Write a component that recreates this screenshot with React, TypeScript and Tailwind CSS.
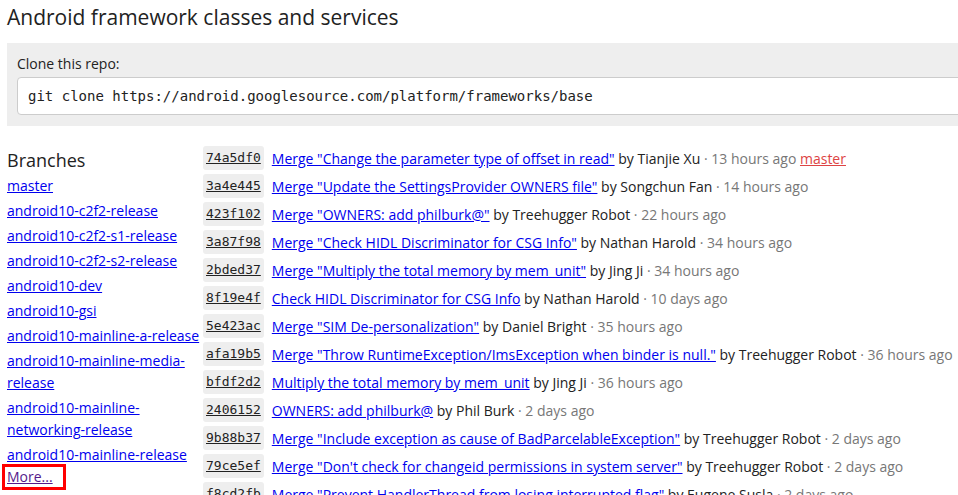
import React from "react";

const commits: { h: string; m: string; a: string; t: string; tag?: string }[] = [
  { h: "74a5df0", m: 'Merge "Change the parameter type of offset in read"', a: "Tianjie Xu", t: "13 hours ago", tag: "master" },
  { h: "3a4e445", m: 'Merge "Update the SettingsProvider OWNERS file"', a: "Songchun Fan", t: "14 hours ago" },
  { h: "423f102", m: 'Merge "OWNERS: add philburk@"', a: "Treehugger Robot", t: "22 hours ago" },
  { h: "3a87f98", m: 'Merge "Check HIDL Discriminator for CSG Info"', a: "Nathan Harold", t: "34 hours ago" },
  { h: "2bded37", m: 'Merge "Multiply the total memory by mem_unit"', a: "Jing Ji", t: "34 hours ago" },
  { h: "8f19e4f", m: "Check HIDL Discriminator for CSG Info", a: "Nathan Harold", t: "10 days ago" },
  { h: "5e423ac", m: 'Merge "SIM De-personalization"', a: "Daniel Bright", t: "35 hours ago" },
  { h: "afa19b5", m: 'Merge "Throw RuntimeException/ImsException when binder is null."', a: "Treehugger Robot", t: "36 hours ago" },
  { h: "bfdf2d2", m: "Multiply the total memory by mem_unit", a: "Jing Ji", t: "36 hours ago" },
  { h: "2406152", m: "OWNERS: add philburk@", a: "Phil Burk", t: "2 days ago" },
  { h: "9b88b37", m: 'Merge "Include exception as cause of BadParcelableException"', a: "Treehugger Robot", t: "2 days ago" },
  { h: "79ce5ef", m: 'Merge "Don\'t check for changeid permissions in system server"', a: "Treehugger Robot", t: "2 days ago" },
  { h: "f8cd2fb", m: 'Merge "Prevent HandlerThread from losing interrupted flag"', a: "Eugene Susla", t: "2 days ago" },
];

const branches = [
  "master",
  "android10-c2f2-release",
  "android10-c2f2-s1-release",
  "android10-c2f2-s2-release",
  "android10-dev",
  "android10-gsi",
  "android10-mainline-a-release",
  "android10-mainline-media-release",
  "android10-mainline-networking-release",
  "android10-mainline-release",
];

export default function App() {
  return (
    <div className="w-[958px] h-[495px] overflow-hidden bg-white text-[#222] font-['Open_Sans',sans-serif]">
      <div className="w-[1100px] pl-[7px]">
        <h1 className="pt-[3px] text-[21px] leading-[28px] font-normal">Android framework classes and services</h1>
        <div className="mt-[12px] bg-[#eeeeee] pl-[10px] pt-[11px] pb-[11px]">
          <div className="text-[14px] leading-[20px]">Clone this repo:</div>
          <div className="mt-[3px] h-[38px] bg-white border border-[#cccccc] rounded-l-[4px] flex items-center pl-[10px] font-['DejaVu_Sans_Mono',monospace] text-[14px] text-[#222]">
            git clone https://android.googlesource.com/platform/frameworks/base
          </div>
        </div>
        <div className="flex mt-[18px]">
          <div className="w-[196px] shrink-0">
            <h2 className="pt-[4px] text-[18px] leading-[24px] font-normal">Branches</h2>
            <ul>
              {branches.map((b) => (
                <li key={b} className="pt-[3px] text-[14px] leading-[22px]">
                  <a href="#" className="text-[#0000ee] underline">{b}</a>
                </li>
              ))}
              <li className="-mt-[2px] text-[14px] leading-[20px]">
                <span className="inline-block -ml-[5px] w-[64px] border-[3px] border-[#ff0000] pl-[2px]">
                  <a href="#" className="text-[#551a8b] underline">More...</a>
                </span>
              </li>
            </ul>
          </div>
          <ul className="whitespace-nowrap">
            {commits.map((c) => (
              <li key={c.h} className="h-[28px] flex items-center text-[14px]">
                <span className="h-[24px] flex items-center px-[3px] bg-[#eeeeee] rounded-[3px] font-['DejaVu_Sans_Mono',monospace] text-[13px] text-[#222] underline">
                  {c.h}
                </span>
                <span className="ml-[8px]">
                  <a href="#" className="text-[#0000ee] underline">{c.m}</a>
                  <span className="text-[#222]"> by {c.a}</span>
                  <span className="text-[#777]"> · {c.t}</span>
                  {c.tag && (
                    <>
                      {" "}
                      <a href="#" className="text-[#dd4444] underline">{c.tag}</a>
                    </>
                  )}
                </span>
              </li>
            ))}
          </ul>
        </div>
      </div>
    </div>
  );
}
